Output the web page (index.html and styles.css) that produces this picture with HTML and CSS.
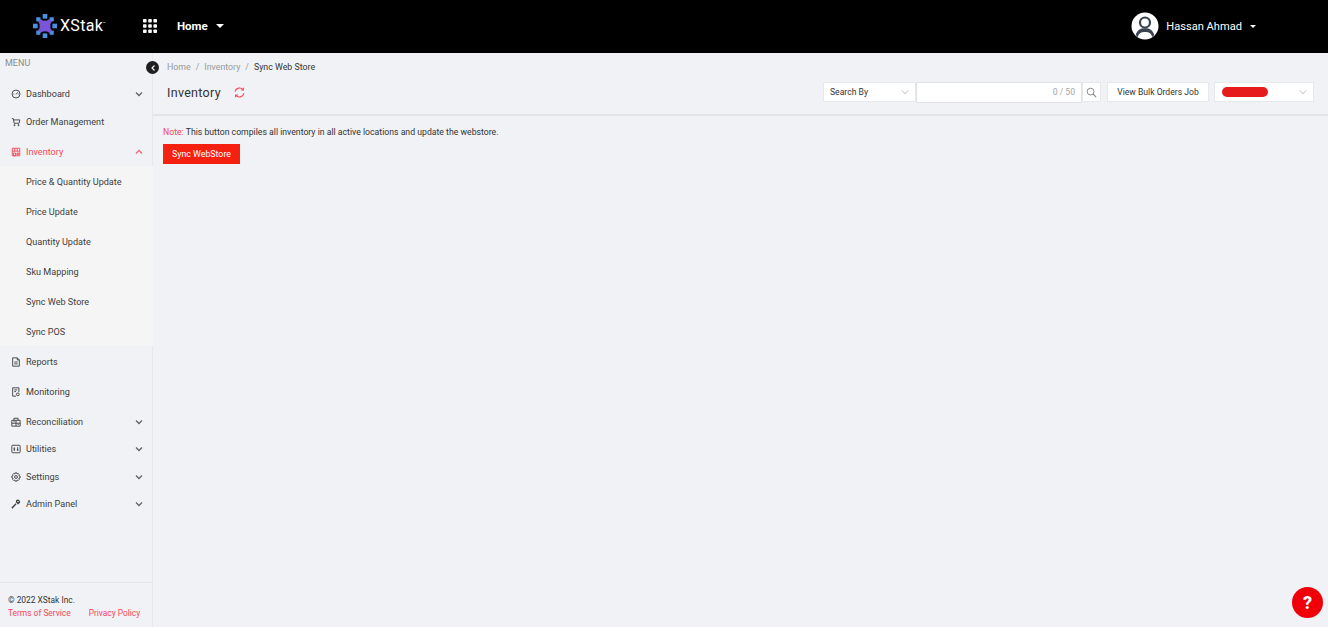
FILE: index.html
```html
<!DOCTYPE html>
<html lang="en">
  <head>
    <meta charset="UTF-8" />
    <title>Sync Web Store</title>
    <link rel="stylesheet" href="styles.css">
  </head>
  <body>
    <header class="topbar">
      <div class="logo">
        <svg width="24" height="24" viewBox="0 0 26 26">
          <g fill="#4a90e2">
            <rect x="10.5" y="0" width="5" height="5" />
            <rect x="10.5" y="21" width="5" height="5" />
            <rect x="0" y="10.5" width="5" height="5" />
            <rect x="21" y="10.5" width="5" height="5" />
            <rect x="3.5" y="3.5" width="4.5" height="4.5" />
            <rect x="18" y="3.5" width="4.5" height="4.5" />
            <rect x="3.5" y="18" width="4.5" height="4.5" />
            <rect x="18" y="18" width="4.5" height="4.5" />
          </g>
          <path d="M8 5.5l5 3 5-3 2.500 2.500-3 5 3 5-2.500 2.500-5-3-5 3-2.500-2.500 3-5-3-5z" fill="#7a55d8" />
          <circle cx="13" cy="13" r="6" fill="#7a55d8" />
        </svg>
        <span class="logo-text">XStak</span><span class="logo-tm">™</span>
      </div>
      <svg class="apps" width="14" height="14" viewBox="0 0 14 14" fill="#fff">
        <rect x="0" y="0" width="3.6" height="3.6" rx="0.8" />
        <rect x="5.2" y="0" width="3.6" height="3.6" rx="0.8" />
        <rect x="10.4" y="0" width="3.6" height="3.6" rx="0.8" />
        <rect x="0" y="5.2" width="3.6" height="3.6" rx="0.8" />
        <rect x="5.2" y="5.2" width="3.6" height="3.6" rx="0.8" />
        <rect x="10.4" y="5.2" width="3.6" height="3.6" rx="0.8" />
        <rect x="0" y="10.4" width="3.6" height="3.6" rx="0.8" />
        <rect x="5.2" y="10.4" width="3.6" height="3.6" rx="0.8" />
        <rect x="10.4" y="10.4" width="3.6" height="3.6" rx="0.8" />
      </svg>
      <div class="home">Home</div>
      <span class="caret home-caret"></span>
      <div class="user">
        <svg width="28" height="28" viewBox="0 0 28 28">
          <circle cx="14" cy="14" r="13.5" fill="#fff" />
          <circle cx="14" cy="10.500" r="5" fill="none" stroke="#3a4250" stroke-width="2.200" />
          <path d="M4.800 23c1.200-5 4.600-6.800 9.200-6.800s8 1.800 9.200 6.800c-.6.800-1.300 1.400-2 1.900-1-3.600-3.500-4.900-7.200-4.900s-6.200 1.300-7.200 4.900c-.7-.5-1.400-1.100-2-1.900z" fill="#3a4250" />
        </svg>
        <span class="user-name">Hassan Ahmad</span>
        <span class="caret user-caret"></span>
      </div>
    </header>

    <div class="layout">
      <aside class="sidebar">
        <div class="menu-label">MENU</div>
        <nav class="menu">
          <div class="row row-fold">
            <svg class="ico" viewBox="0 0 12 12"><circle cx="6" cy="6" r="4.800" /><path d="M6 6.500l2-2.500M2.800 6h1M8.200 6h1" /></svg>
            <span>Dashboard</span>
            <svg class="chev" viewBox="0 0 8 6"><path d="M1 1.500l3 3 3-3" /></svg>
          </div>
          <div class="row row-order">
            <svg class="ico" viewBox="0 0 12 12"><path d="M1 2h1.800l.9 5.500h6l.9-4H3.200" /><circle cx="4.200" cy="9.800" r=".7" /><circle cx="9" cy="9.800" r=".7" /></svg>
            <span>Order Management</span>
          </div>
          <div class="row row-active">
            <svg class="ico" viewBox="0 0 12 12"><path d="M1.500 5V1.500h9V5M1.500 5h9M1.500 5v5.500h9V5M4.500 1.500V5M7.500 1.500V5M3 7.200h2.400v3.300H3zM7 7.200h2v1.800H7z" /></svg>
            <span>Inventory</span>
            <svg class="chev" viewBox="0 0 8 6"><path d="M1 4.500l3-3 3 3" /></svg>
          </div>
          <div class="submenu">
            <div class="row sub-row">Price &amp; Quantity Update</div>
            <div class="row sub-row">Price Update</div>
            <div class="row sub-row">Quantity Update</div>
            <div class="row sub-row">Sku Mapping</div>
            <div class="row sub-row">Sync Web Store</div>
            <div class="row sub-row">Sync POS</div>
          </div>
          <div class="row">
            <svg class="ico" viewBox="0 0 12 12"><path d="M2 1h5.500L10 3.500V11H2zM7.500 1v2.500H10M4 6h4M4 8.200h4" /></svg>
            <span>Reports</span>
          </div>
          <div class="row">
            <svg class="ico" viewBox="0 0 12 12"><path d="M6 11H2V1h7.500v5M4 3.500h3.500M4 5.500h2" /><circle cx="8.200" cy="8.800" r="1.700" /></svg>
            <span>Monitoring</span>
          </div>
          <div class="row row-fold row-gap">
            <svg class="ico" viewBox="0 0 12 12"><path d="M1 4h10v7H1zM3.500 4V1.500h5V4M6 4v7M1 7.500h10M3 5.500h1.200M8 9h1.200" /></svg>
            <span>Reconciliation</span>
            <svg class="chev" viewBox="0 0 8 6"><path d="M1 1.500l3 3 3-3" /></svg>
          </div>
          <div class="row row-fold">
            <svg class="ico" viewBox="0 0 12 12"><rect x="1" y="1.500" width="10" height="9" rx="1" /><path d="M4 4v4.500M3 6h2M8 3.800v4.500M7 7h2" /></svg>
            <span>Utilities</span>
            <svg class="chev" viewBox="0 0 8 6"><path d="M1 1.500l3 3 3-3" /></svg>
          </div>
          <div class="row row-fold">
            <svg class="ico" viewBox="0 0 12 12"><circle cx="6" cy="6" r="1.700" /><path d="M5 1h2l.3 1.400 1.300-.6 1.400 1.400-.6 1.300L11 5v2l-1.600.4.6 1.400-1.400 1.400-1.300-.6L7 11H5l-.4-1.400-1.300.6-1.400-1.400.6-1.400L1 7V5l1.500-.5-.6-1.300 1.400-1.400 1.300.6z" /></svg>
            <span>Settings</span>
            <svg class="chev" viewBox="0 0 8 6"><path d="M1 1.500l3 3 3-3" /></svg>
          </div>
          <div class="row row-fold">
            <svg class="ico" viewBox="0 0 12 12"><path d="M1.500 10.500l4.600-4.800M7 1.800c1.600-.8 3.200.2 3.200 2L8.600 5.400 6.600 3.600zM1 9.500l1.500 1.500" stroke-width="1.600" /></svg>
            <span>Admin Panel</span>
            <svg class="chev" viewBox="0 0 8 6"><path d="M1 1.500l3 3 3-3" /></svg>
          </div>
        </nav>
        <div class="side-foot">
          <div>© 2022 XStak Inc.</div>
          <div class="foot-links"><span>Terms of Service</span><span>Privacy Policy</span></div>
        </div>
      </aside>

      <main class="main">
        <div class="collapse-btn">
          <svg width="6" height="8" viewBox="0 0 6 8"><path d="M4.500 1.500L2 4l2.500 2.500" fill="none" stroke="#fff" stroke-width="1.100" /></svg>
        </div>
        <div class="page-head">
          <div class="crumbs">
            <span>Home</span><span class="sep">/</span><span>Inventory</span><span class="sep">/</span><span class="crumb-now">Sync Web Store</span>
          </div>
          <div class="title-row">
            <h1>Inventory</h1>
            <svg class="refresh" width="11" height="11" viewBox="0 0 12 12"><path d="M1.200 5A5 5 0 0 1 9.800 2.800M10.800 7A5 5 0 0 1 2.200 9.200" /><path d="M10.200 .8v2.500H7.700M1.800 11.200V8.700h2.500" /></svg>
            <div class="tools">
              <div class="select search-by">
                <span>Search By</span>
                <svg class="chev-light" viewBox="0 0 8 6"><path d="M.8 1.200L4 4.800l3.200-3.600" /></svg>
              </div>
              <div class="search-input">0 / 50</div>
              <div class="search-btn">
                <svg width="11" height="11" viewBox="0 0 11 11"><circle cx="4.600" cy="4.600" r="3.400" fill="none" stroke="#888" /><path d="M7.200 7.200l3 3" stroke="#888" stroke-width="1.200" /></svg>
              </div>
              <div class="btn-plain">View Bulk Orders Job</div>
              <div class="select store-select">
                <span class="redact"></span>
                <svg class="chev-light" viewBox="0 0 8 6"><path d="M.8 1.200L4 4.800l3.200-3.600" /></svg>
              </div>
            </div>
          </div>
        </div>
        <div class="page-body">
          <p class="note"><span class="note-tag">Note:</span> This button compiles all inventory in all active locations and update the webstore.</p>
          <button class="btn-sync">Sync WebStore</button>
        </div>
        <div class="help">?</div>
      </main>
    </div>
  </body>
</html>
```

FILE: styles.css
```css
* {
  box-sizing: border-box;
}

body {
  margin: 0;
  height: 100vh;
  overflow: hidden;
  display: flex;
  flex-direction: column;
  background-color: #f0f2f5;
  color: #333;
  font-family: Roboto, "Noto Sans", sans-serif;
  font-size: 9.1px;
}

/* top bar */
.topbar {
  height: 53px;
  flex-shrink: 0;
  background-color: #000;
  color: #fff;
  display: flex;
  align-items: center;
  padding: 0 0 1px 33px;
}

.logo {
  width: 110px;
  display: flex;
  align-items: center;
}

.logo-text {
  margin-left: 3px;
  font-size: 16px;
  letter-spacing: 0.3px;
  line-height: 1;
}

.logo-tm {
  font-size: 4px;
  align-self: flex-start;
  margin-top: 7px;
}

.apps {
  margin-right: 20px;
}

.home {
  font-size: 11.5px;
  font-weight: 700;
}

.caret {
  width: 0;
  height: 0;
  border-left: 4px solid transparent;
  border-right: 4px solid transparent;
  border-top: 4px solid #fff;
}

.home-caret {
  margin-left: 8px;
}

.user {
  margin-left: auto;
  margin-right: 72px;
  display: flex;
  align-items: center;
}

.user-name {
  margin-left: 7px;
  font-size: 11.1px;
}

.user-caret {
  margin-left: 8px;
  border-left-width: 3.5px;
  border-right-width: 3.5px;
  border-top-width: 3.5px;
}

/* sidebar */
.layout {
  flex: 1;
  display: flex;
  min-height: 0;
}

.sidebar {
  width: 153px;
  flex-shrink: 0;
  display: flex;
  flex-direction: column;
  border-right: 1px solid #e6e8eb;
}

.menu-label {
  height: 27px;
  padding: 4px 0 0 5px;
  color: #8c8c8c;
  font-size: 9px;
  line-height: 12px;
}

.row {
  height: 30px;
  display: flex;
  align-items: center;
  padding: 1px 9px 0 11px;
  color: #404040;
}

.row-fold {
  height: 27.5px;
}

.row-order {
  height: 28.5px;
  padding-top: 0;
}

.row-gap {
  margin-top: 1.5px;
}

.row-active {
  color: #f5475b;
}

.ico {
  width: 10px;
  height: 10px;
  margin-right: 5px;
  flex-shrink: 0;
  fill: none;
  stroke: currentColor;
  stroke-width: 1.1;
}

.chev {
  width: 8px;
  height: 6px;
  margin-left: auto;
  fill: none;
  stroke: currentColor;
  stroke-width: 1.3;
  opacity: 0.8;
}

.submenu {
  background-color: #f5f5f5;
  margin-right: -1px;
}

.sub-row {
  padding-left: 26px;
}

.side-foot {
  margin-top: auto;
  height: 45px;
  border-top: 1px solid #e3e5e8;
  padding: 11px 8px 0 8px;
  line-height: 13px;
  font-size: 8.4px;
}

.foot-links {
  display: flex;
  gap: 18px;
  white-space: nowrap;
  color: #f5475b;
}

/* main area */
.main {
  flex: 1;
  min-width: 0;
  position: relative;
}

.collapse-btn {
  position: absolute;
  left: -7px;
  top: 8px;
  width: 13px;
  height: 13px;
  border-radius: 50%;
  background-color: #1f1f1f;
  display: flex;
  align-items: center;
  justify-content: center;
}

.page-head {
  height: 63px;
  padding: 8px 14px 0 14px;
  border-bottom: 2px solid #e2e4e8;
}

.crumbs {
  height: 12px;
  line-height: 12px;
  font-size: 8.8px;
  color: #9a9a9a;
}

.sep {
  margin: 0 5px;
}

.crumb-now {
  color: #333;
}

.title-row {
  margin-top: 8px;
  height: 22px;
  display: flex;
  align-items: center;
}

h1 {
  margin: 0;
  font-size: 12.5px;
  font-weight: 400;
  letter-spacing: 0.3px;
  color: #333;
}

.refresh {
  margin-left: 13px;
  fill: none;
  stroke: #f5475b;
  stroke-width: 1.3;
}

.tools {
  margin-left: auto;
  display: flex;
  align-items: center;
  font-size: 8.6px;
}

.select,
.btn-plain,
.search-btn {
  height: 20px;
  background-color: #fff;
  border: 1px solid #e6e8eb;
  display: flex;
  align-items: center;
}

.select {
  padding: 0 6px;
  justify-content: space-between;
}

.search-by {
  width: 93px;
}

.chev-light {
  width: 8px;
  height: 6px;
  fill: none;
  stroke: #bdbdbd;
}

.search-input {
  width: 166px;
  height: 21px;
  background-color: #fff;
  border: 1px solid #e0e2e5;
  color: #a6a6a6;
  line-height: 19px;
  text-align: right;
  padding-right: 6px;
}

.search-btn {
  width: 19px;
  justify-content: center;
}

.btn-plain {
  margin-left: 6px;
  width: 102px;
  justify-content: center;
}

.store-select {
  margin-left: 5px;
  width: 100px;
}

.redact {
  margin-left: 1px;
  width: 46px;
  height: 10px;
  border-radius: 5px;
  background-color: #e61c1c;
}

.page-body {
  padding: 10px 10px;
}

.note {
  margin: 0;
  line-height: 13px;
  font-size: 8.7px;
}

.note-tag {
  color: #f5475b;
}

.btn-sync {
  display: block;
  margin-top: 5px;
  width: 77px;
  height: 20px;
  padding: 0;
  border: 0;
  background-color: #f5200f;
  color: #fff;
  font-family: inherit;
  font-size: 8.8px;
}

.help {
  position: absolute;
  right: 5px;
  bottom: 9px;
  width: 31px;
  height: 31px;
  border-radius: 50%;
  background-color: #f00008;
  color: #fff;
  font-size: 18px;
  font-weight: 800;
  line-height: 31px;
  text-align: center;
}
```
